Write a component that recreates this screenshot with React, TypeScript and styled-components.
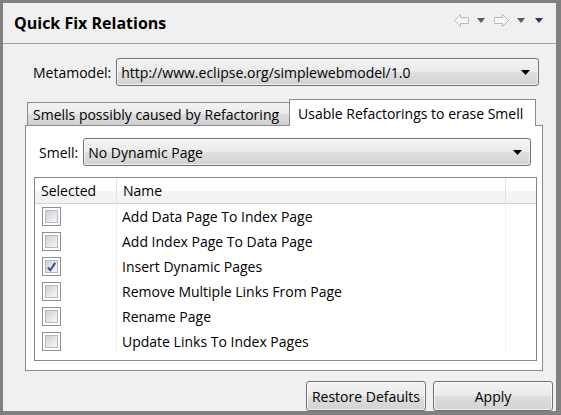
import { Fragment } from "react";
import styled, { createGlobalStyle } from "styled-components";

const GlobalStyle = createGlobalStyle`
    html, body {
        margin: 0;
        padding: 0;
        background: #f0f0f0;
    }
    body {
        font-family: "Open Sans", "Liberation Sans", sans-serif;
        font-size: 14px;
        color: #000;
    }
`;

const Frame = styled.div`
    width: 561px;
    height: 415px;
    box-sizing: border-box;
    border-style: solid;
    border-color: #808080;
    border-width: 3px 5px 4px 3px;
    background: #f0f0f0;
    display: flex;
    flex-direction: column;
`;

const Header = styled.header`
    height: 40px;
    border-bottom: 1px solid #a0a0a0;
    display: flex;
    align-items: center;
    justify-content: space-between;
    padding: 0 10px 0 11px;
`;

const Title = styled.h1`
    margin: 0;
    font-size: 16px;
    font-weight: 700;
`;

const ViewTools = styled.div`
    display: flex;
    align-items: center;
    margin-top: -6px;
`;

const ToolSlot = styled.span<{ $w: number }>`
    width: ${(p) => p.$w}px;
    display: flex;
    justify-content: center;
    align-items: center;
`;

const Content = styled.div`
    display: flex;
    flex-direction: column;
    padding-left: 22px;
`;

const FieldRow = styled.div<{ $width: number }>`
    display: flex;
    align-items: center;
    gap: 5px;
    width: ${(p) => p.$width}px;
`;

const MetaRow = styled(FieldRow)`
    margin: 14px 0 0 8px;
`;

const SmellRow = styled(FieldRow)`
    margin: 0 0 0 5px;
`;

const Label = styled.span`
    white-space: nowrap;
`;

const Combo = styled.div`
    flex: 1;
    height: 28px;
    box-sizing: border-box;
    border: 1px solid #707070;
    border-radius: 3px;
    background: linear-gradient(#f3f3f3 0%, #ebebeb 48%, #dedede 52%, #d2d2d2 100%);
    box-shadow: inset 0 0 0 1px rgba(255, 255, 255, 0.7);
    display: flex;
    align-items: center;
    justify-content: space-between;
    padding: 0 8px 0 4px;
    white-space: nowrap;
`;

const TabFolder = styled.div`
    margin-top: 13px;
    width: 518px;
    display: flex;
    flex-direction: column;
`;

const TabStrip = styled.div`
    display: flex;
    align-items: flex-end;
    height: 26px;
    padding-left: 2px;
`;

const Tab = styled.div<{ $active?: boolean; $w: number }>`
    width: ${(p) => p.$w}px;
    box-sizing: border-box;
    height: ${(p) => (p.$active ? 27 : 23)}px;
    margin-bottom: ${(p) => (p.$active ? -1 : 0)}px;
    position: relative;
    z-index: ${(p) => (p.$active ? 1 : 0)};
    border: 1px solid #898c95;
    border-bottom: none;
    ${(p) => (p.$active ? "" : "border-right: none;")}
    background: ${(p) => (p.$active ? "#ffffff" : "linear-gradient(#f2f2f2 0%, #ebebeb 50%, #dddddd 51%, #cfcfcf 100%)")};
    padding: ${(p) => (p.$active ? "1px 0 0 8px" : "0 0 0 5px")};
    display: flex;
    align-items: center;
    white-space: nowrap;
`;

const Panel = styled.div`
    height: 246px;
    box-sizing: border-box;
    border: 1px solid #898c95;
    background: #ffffff;
    padding: 12px 5px 9px 8px;
    display: flex;
    flex-direction: column;
`;

const Table = styled.div`
    margin-top: 11px;
    height: 184px;
    box-sizing: border-box;
    border: 1px solid #828790;
    background: #fff;
    display: flex;
    flex-direction: column;
`;

const Columns = "82px 389px 1fr";

const HeadRow = styled.div`
    display: grid;
    grid-template-columns: ${Columns};
    height: 26px;
    box-sizing: border-box;
    border-bottom: 1px solid #d5d5d5;
    background: linear-gradient(#ffffff 0%, #ffffff 50%, #f4f5f7 51%, #f1f2f4 100%);
`;

const HeadCell = styled.div`
    border-right: 1px solid #e3e4e6;
    padding-left: 6px;
    display: flex;
    align-items: center;
    &:last-child {
        border-right: none;
    }
`;

const Body = styled.div`
    flex: 1;
    display: grid;
    grid-template-columns: ${Columns};
    grid-auto-rows: 25px;
    align-content: start;
`;

const Cell = styled.div<{ $pad?: number }>`
    border-right: 1px solid #eef3fa;
    display: flex;
    align-items: center;
    padding-left: ${(p) => p.$pad ?? 0}px;
    white-space: nowrap;
`;

const BlankCell = styled.div``;

const CheckBox = styled.span`
    width: 19px;
    height: 19px;
    box-sizing: border-box;
    border: 1px solid #8e8f8f;
    background: #ffffff;
    padding: 2px;
    display: block;
`;

const CheckFill = styled.span`
    display: flex;
    align-items: center;
    justify-content: center;
    width: 100%;
    height: 100%;
    box-sizing: border-box;
    border: 1px solid #b5b9bf;
    background: linear-gradient(135deg, #cdd1d6 0%, #e4e6e9 55%, #f8f8f8 100%);
`;

const ButtonBar = styled.div`
    display: flex;
    justify-content: flex-end;
    gap: 7px;
    margin-top: 10px;
    padding-right: 3px;
`;

const Button = styled.button`
    width: 120px;
    height: 30px;
    box-sizing: border-box;
    border: 1px solid #707070;
    border-radius: 3px;
    background: linear-gradient(#f3f3f3 0%, #ebebeb 48%, #dedede 52%, #d2d2d2 100%);
    box-shadow: inset 0 0 0 1px rgba(255, 255, 255, 0.7);
    font-family: "Open Sans", "Liberation Sans", sans-serif;
    font-size: 14px;
    color: #000;
    padding: 0;
`;

const DropArrow = () => (
    <svg width="9" height="5" viewBox="0 0 9 5">
        <polygon points="0,0 9,0 4.5,5" fill="#000" />
    </svg>
);

const MiniTriangle = ({ color }: { color: string }) => (
    <svg width="8" height="5" viewBox="0 0 8 5">
        <polygon points="0,0 8,0 4,5" fill={color} />
    </svg>
);

const HollowArrow = ({ flip }: { flip?: boolean }) => (
    <svg width="15" height="13" viewBox="0 0 15 13" style={flip ? { transform: "scaleX(-1)" } : undefined}>
        <polygon
            points="0.5,6.5 6.5,0.5 6.5,3.5 14.5,3.5 14.5,9.5 6.5,9.5 6.5,12.5"
            fill="#f7f7f7"
            stroke="#b9b9b9"
            strokeWidth="1"
        />
    </svg>
);

const CheckMark = () => (
    <svg width="12" height="12" viewBox="0 0 12 12">
        <path d="M2 6.5 L4.8 9.5 L10 1.5" fill="none" stroke="#3c4f8c" strokeWidth="2.2" />
    </svg>
);

const refactorings = [
    { name: "Add Data Page To Index Page", selected: false },
    { name: "Add Index Page To Data Page", selected: false },
    { name: "Insert Dynamic Pages", selected: true },
    { name: "Remove Multiple Links From Page", selected: false },
    { name: "Rename Page", selected: false },
    { name: "Update Links To Index Pages", selected: false },
];

function App() {
    return (
        <>
            <GlobalStyle />
            <Frame>
                <Header>
                    <Title>Quick Fix Relations</Title>
                    <ViewTools>
                        <ToolSlot $w={18}><HollowArrow /></ToolSlot>
                        <ToolSlot $w={22}><MiniTriangle color="#5c5c5c" /></ToolSlot>
                        <ToolSlot $w={18}><HollowArrow flip /></ToolSlot>
                        <ToolSlot $w={22}><MiniTriangle color="#5c5c5c" /></ToolSlot>
                        <ToolSlot $w={14}><MiniTriangle color="#2b3566" /></ToolSlot>
                    </ViewTools>
                </Header>
                <Content>
                    <MetaRow $width={506}>
                        <Label>Metamodel:</Label>
                        <Combo>
                            <span>http://www.eclipse.org/simplewebmodel/1.0</span>
                            <DropArrow />
                        </Combo>
                    </MetaRow>
                    <TabFolder>
                        <TabStrip>
                            <Tab $w={262}>Smells possibly caused by Refactoring</Tab>
                            <Tab $w={247} $active>Usable Refactorings to erase Smell</Tab>
                        </TabStrip>
                        <Panel>
                            <SmellRow $width={492}>
                                <Label>Smell:</Label>
                                <Combo>
                                    <span>No Dynamic Page</span>
                                    <DropArrow />
                                </Combo>
                            </SmellRow>
                            <Table>
                                <HeadRow>
                                    <HeadCell>Selected</HeadCell>
                                    <HeadCell>Name</HeadCell>
                                    <HeadCell />
                                </HeadRow>
                                <Body>
                                    {refactorings.map((r) => (
                                        <Fragment key={r.name}>
                                            <Cell $pad={7}>
                                                <CheckBox>
                                                    <CheckFill>{r.selected && <CheckMark />}</CheckFill>
                                                </CheckBox>
                                            </Cell>
                                            <Cell $pad={5}>{r.name}</Cell>
                                            <BlankCell />
                                        </Fragment>
                                    ))}
                                </Body>
                            </Table>
                        </Panel>
                    </TabFolder>
                    <ButtonBar>
                        <Button>Restore Defaults</Button>
                        <Button>Apply</Button>
                    </ButtonBar>
                </Content>
            </Frame>
        </>
    );
}

export default App;
